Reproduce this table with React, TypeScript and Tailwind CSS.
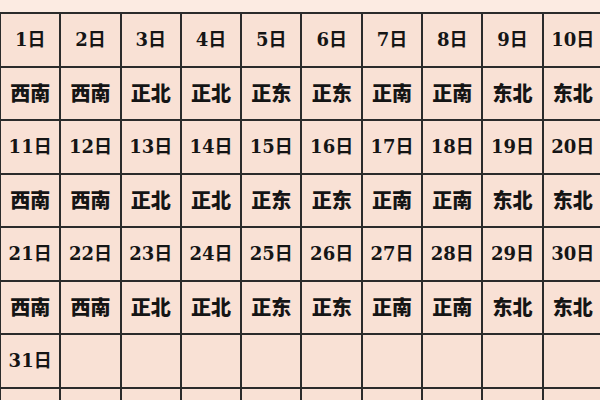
const DIRS = ["西南", "西南", "正北", "正北", "正东", "正东", "正南", "正南", "东北", "东北"];

type Row = { kind: "date" | "dir"; cells: string[] };

function buildRows(): Row[] {
  const rows: Row[] = [];
  for (let start = 1; start <= 31; start += 10) {
    const dates: string[] = [];
    const dirs: string[] = [];
    for (let i = 0; i < 10; i++) {
      const d = start + i;
      dates.push(d <= 31 ? `${d}日` : "");
      dirs.push(d <= 30 ? DIRS[i] : "");
    }
    rows.push({ kind: "date", cells: dates });
    rows.push({ kind: "dir", cells: dirs });
  }
  return rows;
}

export default function App() {
  const rows = buildRows();

  return (
    <div className="h-[400px] w-[600px] overflow-hidden bg-[#fcebe2]">
      <div className="h-[12px]" />
      <div className="grid w-[602px] grid-cols-10 auto-rows-[51.5px] gap-[2px] border-t-2 border-l-[1px] border-[#2b2b2b] bg-[#2b2b2b]">
        {rows.map((row, r) =>
          row.cells.map((c, i) => (
            <div
              key={`${r}-${i}`}
              className={
                "flex items-center justify-center bg-[#f9e1d5] text-[#151515] " +
                (row.kind === "date"
                  ? "text-[18px] font-bold font-['DejaVu_Serif','Noto_Sans_CJK_SC',serif]"
                  : "text-[20px] font-black font-['Noto_Sans_CJK_SC',sans-serif]")
              }
            >
              {c}
            </div>
          ))
        )}
      </div>
    </div>
  );
}
